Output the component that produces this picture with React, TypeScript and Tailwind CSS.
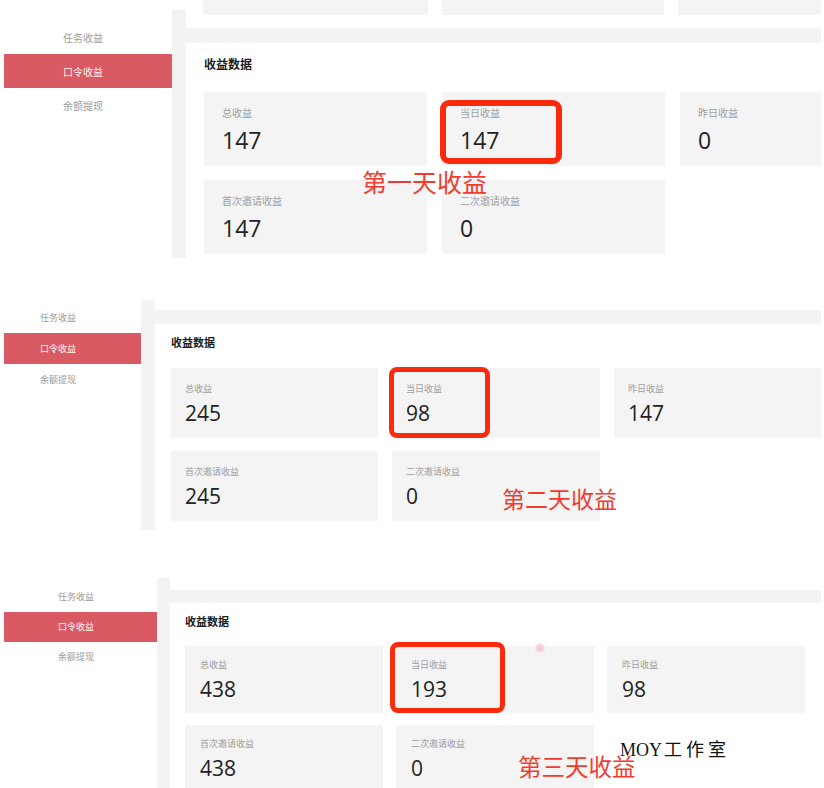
import React from 'react';

interface Stat {
  label: string;
  value: string;
}

interface Variant {
  root: string;
  side: string;
  item: string;
  gutter: string;
  topWhite: string;
  band: string;
  card: string;
  title: string;
  grid: string;
  stat: string;
  label: string;
  value: string;
  box: string;
  note: string;
  noteText: string;
  showTopBoxes?: boolean;
  stats: Stat[];
}

const menu = ['任务收益', '口令收益', '余额提现'];

const panels: Variant[] = [
  {
    root: 'h-[262px]',
    side: 'w-[168px] pt-[20px]',
    item: 'h-[34px] pl-[59px] text-[10px]',
    gutter: 'w-[14px] mt-[10px] mb-[4px]',
    topWhite: 'h-[28px] pl-[17px] gap-[14px]',
    band: 'h-[15px]',
    card: 'pt-[14px] pl-[18px] pb-[3px]',
    title: 'text-[12px] leading-[14px]',
    grid: 'mt-[21px] grid-cols-[223px_223px_1fr] gap-x-[15px] gap-y-[14px] auto-rows-[74px]',
    stat: 'pl-[18px] pt-[15px]',
    label: 'text-[10px] leading-[12px]',
    value: 'text-[23px] leading-[26px] mt-[8px]',
    box: 'left-[440px] top-[100px] w-[122px] h-[64px] border-[6px] rounded-[9px]',
    note: 'left-[362px] top-[168px] text-[25px] leading-[26px]',
    noteText: '第一天收益',
    showTopBoxes: true,
    stats: [
      { label: '总收益', value: '147' },
      { label: '当日收益', value: '147' },
      { label: '昨日收益', value: '0' },
      { label: '首次邀请收益', value: '147' },
      { label: '二次邀请收益', value: '0' },
    ],
  },
  {
    root: 'h-[230px] mt-[38px]',
    side: 'w-[137px] pt-[2px]',
    item: 'h-[31px] pl-[36px] text-[9px]',
    gutter: 'w-[14px]',
    topWhite: 'h-[10px]',
    band: 'h-[14px]',
    card: 'pt-[11px] pl-[16px] pb-[9px]',
    title: 'text-[11px] leading-[14px]',
    grid: 'mt-[19px] grid-cols-[207px_208px_1fr] gap-x-[14px] gap-y-[13px] auto-rows-[70px]',
    stat: 'pl-[14px] pt-[15px]',
    label: 'text-[9px] leading-[12px]',
    value: 'text-[21px] leading-[24px] mt-[6px]',
    box: 'left-[389px] top-[67px] w-[101px] h-[71px] border-[5px] rounded-[8px]',
    note: 'left-[502px] top-[184px] text-[23px] leading-[28px]',
    noteText: '第二天收益',
    stats: [
      { label: '总收益', value: '245' },
      { label: '当日收益', value: '98' },
      { label: '昨日收益', value: '147' },
      { label: '首次邀请收益', value: '245' },
      { label: '二次邀请收益', value: '0' },
    ],
  },
  {
    root: 'h-[210px] mt-[48px]',
    side: 'w-[153px] pt-[4px]',
    item: 'h-[30px] pl-[54px] text-[9px]',
    gutter: 'w-[13px]',
    topWhite: 'h-[12px]',
    band: 'h-[13px]',
    card: 'pt-[11px] pl-[15px]',
    title: 'text-[11px] leading-[14px]',
    grid: 'mt-[18px] grid-cols-[198px_198px_198px] gap-x-[13px] gap-y-[12px] auto-rows-[67px]',
    stat: 'pl-[15px] pt-[13px]',
    label: 'text-[9px] leading-[12px]',
    value: 'text-[21px] leading-[24px] mt-[6px]',
    box: 'left-[390px] top-[64px] w-[115px] h-[71px] border-[5px] rounded-[8px]',
    note: 'left-[518px] top-[174px] text-[23.5px] leading-[28px]',
    noteText: '第三天收益',
    stats: [
      { label: '总收益', value: '438' },
      { label: '当日收益', value: '193' },
      { label: '昨日收益', value: '98' },
      { label: '首次邀请收益', value: '438' },
      { label: '二次邀请收益', value: '0' },
    ],
  },
];

const Panel = ({ v, children }: { v: Variant; children?: React.ReactNode }) => (
  <div className={`relative flex overflow-hidden ${v.root}`}>
    {/* sidebar menu */}
    <div className={`ml-[4px] shrink-0 bg-white ${v.side}`}>
      {menu.map((m, i) => (
        <div
          key={m}
          className={`flex items-center ${v.item} ${
            i === 1 ? 'bg-[#d95a63] text-[#fff3f4]' : 'text-[#9b9b9b]'
          }`}
        >
          {m}
        </div>
      ))}
    </div>
    <div className={`shrink-0 bg-[#f3f3f3] ${v.gutter}`} />

    {/* main content */}
    <div className="flex-1 mr-[3px] flex flex-col">
      <div className={`shrink-0 flex bg-white ${v.topWhite}`}>
        {v.showTopBoxes && (
          <>
            <div className="w-[225px] h-[15px] bg-[#f4f4f4]" />
            <div className="w-[222px] h-[15px] bg-[#f4f4f4]" />
            <div className="flex-1 h-[15px] bg-[#f4f4f4]" />
          </>
        )}
      </div>
      <div className={`shrink-0 bg-[#f3f3f3] ${v.band}`} />
      <div className={`shrink-0 bg-white ${v.card}`}>
        <div className={`font-bold text-[#1c1c1c] ${v.title}`}>收益数据</div>
        <div className={`grid ${v.grid}`}>
          {v.stats.map((s) => (
            <div key={s.label} className={`bg-[#f4f4f4] ${v.stat}`}>
              <div className={`text-[#9e9e9e] ${v.label}`}>{s.label}</div>
              <div
                className={`text-[#222] font-['Open_Sans','Noto_Sans_CJK_SC',sans-serif] ${v.value}`}
              >
                {s.value}
              </div>
            </div>
          ))}
        </div>
      </div>
    </div>

    {/* annotations */}
    <div className={`absolute border-[#fa2a0c] ${v.box}`} />
    <div className={`absolute whitespace-nowrap text-[#f23b2f] ${v.note}`}>{v.noteText}</div>
    {children}
  </div>
);

export default function App() {
  return (
    <div className="w-[824px] h-[788px] overflow-hidden bg-white font-['Noto_Sans_CJK_SC','Noto_Sans',sans-serif]">
      <Panel v={panels[0]} />
      <Panel v={panels[1]} />
      <Panel v={panels[2]}>
        <div className="absolute left-[536px] top-[66px] w-[8px] h-[8px] rounded-full bg-[#f6c9cf] blur-[1px]" />
        <div className="absolute left-[620px] top-[160px] whitespace-nowrap text-[18px] leading-[24px] text-[#111] font-['Liberation_Serif','Noto_Sans_CJK_SC',serif]">
          MOY<span className="tracking-[4px] ml-[2px]">工作室</span>
        </div>
      </Panel>
    </div>
  );
}
